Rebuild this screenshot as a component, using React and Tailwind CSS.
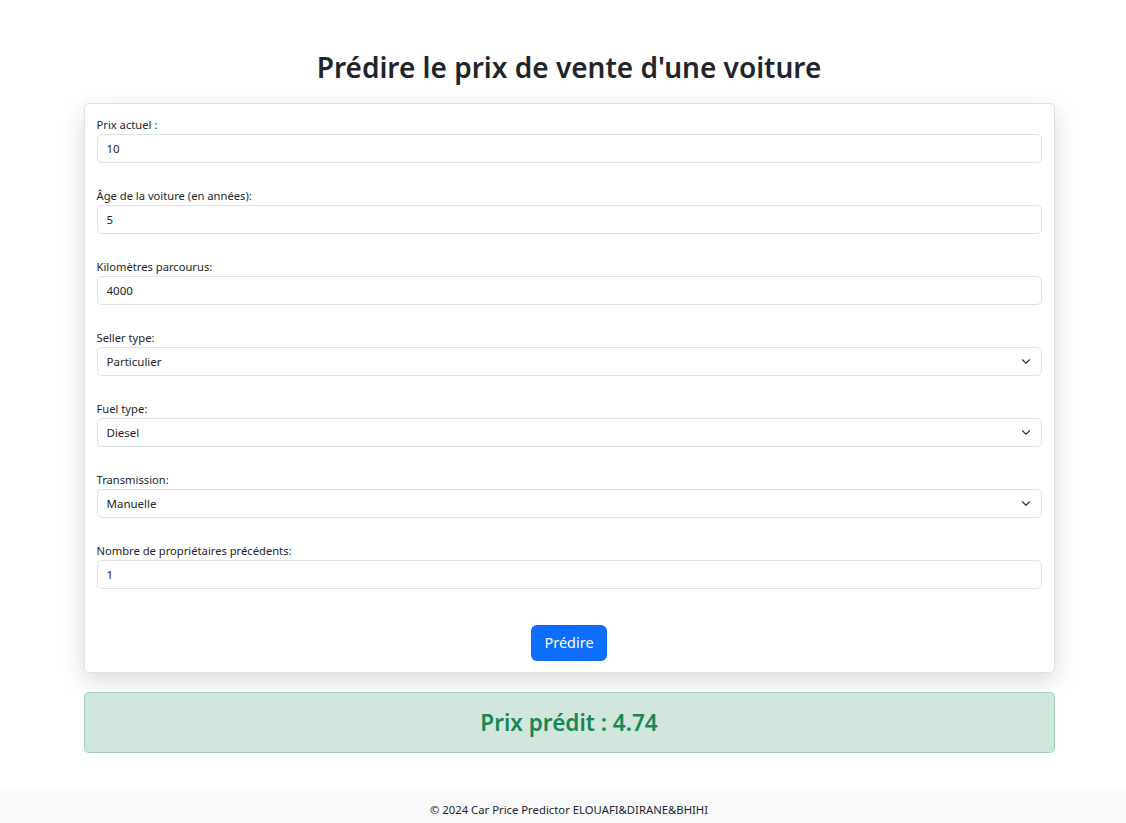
import { useState } from 'react'

const font = { fontFamily: '"Noto Sans", "Open Sans", Arial, sans-serif' }

function Field({ label, children }) {
  return (
    <div className="mb-6 flex flex-col">
      <label className="h-[18px] text-[11.2px] leading-[18px] text-[#212529]">{label}</label>
      {children}
    </div>
  )
}

function TextInput({ value }) {
  const [val, setVal] = useState(value)
  return (
    <input
      value={val}
      onChange={(e) => setVal(e.target.value)}
      className="h-[29px] w-full rounded-[5px] border border-[#dee2e6] bg-white px-[9px] text-[11.5px] text-[#212529] outline-none"
    />
  )
}

function Select({ value, options }) {
  const [val, setVal] = useState(value)
  return (
    <div className="relative">
      <select
        value={val}
        onChange={(e) => setVal(e.target.value)}
        className="h-[29px] w-full appearance-none rounded-[5px] border border-[#dee2e6] bg-white px-[9px] text-[11.5px] text-[#212529] outline-none"
      >
        {options.map((o) => (
          <option key={o}>{o}</option>
        ))}
      </select>
      <svg
        className="pointer-events-none absolute right-[11px] top-[11px]"
        width="10"
        height="7"
        viewBox="0 0 16 12"
        fill="none"
        stroke="#343a40"
        strokeWidth="2"
        strokeLinecap="round"
        strokeLinejoin="round"
      >
        <path d="M2 3l6 6 6-6" />
      </svg>
    </div>
  )
}

export default function App() {
  return (
    <div className="flex min-h-[823px] flex-col bg-white pl-[12px]" style={font}>
      <main className="mx-auto w-[971px] flex-1">
        <h1 className="pt-[48px] pb-[16px] text-center text-[28px] font-semibold leading-[39px] text-[#212529]">
          Prédire le prix de vente d'une voiture
        </h1>

        <form
          onSubmit={(e) => e.preventDefault()}
          className="rounded-[5px] border border-[#dee2e6] bg-white px-[12px] pt-[12px] pb-[11px] shadow-[0_8px_24px_rgba(0,0,0,0.15)]"
        >
          <Field label="Prix actuel :">
            <TextInput value="10" />
          </Field>
          <Field label="Âge de la voiture (en années):">
            <TextInput value="5" />
          </Field>
          <Field label="Kilomètres parcourus:">
            <TextInput value="4000" />
          </Field>
          <Field label="Seller type:">
            <Select value="Particulier" options={['Particulier', 'Concessionnaire']} />
          </Field>
          <Field label="Fuel type:">
            <Select value="Diesel" options={['Essence', 'Diesel', 'CNG']} />
          </Field>
          <Field label="Transmission:">
            <Select value="Manuelle" options={['Manuelle', 'Automatique']} />
          </Field>
          <Field label="Nombre de propriétaires précédents:">
            <TextInput value="1" />
          </Field>
          <div className="flex justify-center pt-[12px]">
            <button
              type="submit"
              className="h-[36px] rounded-[6px] bg-[#0d6efd] px-[13px] text-[14.5px] text-white"
            >
              Prédire
            </button>
          </div>
        </form>

        <div className="mt-[19px] flex h-[61px] items-center justify-center rounded-[5px] border border-[#a3cfbb] bg-[#d1e7dd]">
          <h2 className="text-[22.5px] font-semibold text-[#198754]">Prix prédit : 4.74</h2>
        </div>
      </main>

      <footer className="-ml-[12px] mt-[36px] flex h-[34px] items-center justify-center bg-[#f8f9fa] pl-[12px] pt-[8px] text-[11.3px] text-[#212529]">
        © 2024 Car Price Predictor ELOUAFI&amp;DIRANE&amp;BHIHI
      </footer>
    </div>
  )
}
